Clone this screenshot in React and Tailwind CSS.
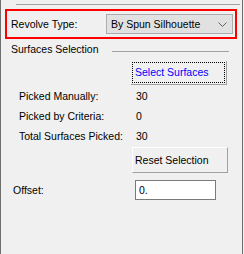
const font = { fontFamily: '"Liberation Sans", Arial, sans-serif' };

const CountRow = ({ label, value, className = '' }) => (
  <div className={`flex ml-[18px] h-[13px] leading-[13px] ${className}`}>
    <span className="w-[117px]">{label}</span>
    <span>{value}</span>
  </div>
);

const App = () => {
  return (
    <div className="w-[244px] h-[254px] bg-[#f0f0f0] pr-px text-[10.5px] text-black" style={font}>
      <div className="h-full border-l border-r border-[#6e6e6e] flex flex-col">
        {/* top rule */}
        <div className="mt-[4px] ml-[15px] mr-[2px] h-px bg-[#a0a0a0]" />

        {/* revolve type */}
        <div className="mt-[4px] ml-[4px] w-[232px] h-[30px] border-2 border-[#ff0000] flex items-center justify-between pl-[4px] pr-[2px]">
          <span className="leading-[13px]">Revolve Type:</span>
          <div className="w-[127px] h-[20px] bg-[#e1e1e1] border border-[#adadad] flex items-center justify-between pl-[4px] pr-[5px]">
            <span className="leading-[13px]">By Spun Silhouette</span>
            <svg width="9" height="5" viewBox="0 0 9 5" fill="none">
              <path d="M0.5 0.5L4.5 4.5L8.5 0.5" stroke="#606060" strokeWidth="1" />
            </svg>
          </div>
        </div>

        {/* group header */}
        <div className="mt-[4px] flex h-[13px] leading-[13px]">
          <span className="ml-[10px]">Surfaces Selection</span>
          <div className="ml-auto mr-[13px] mt-[8px] w-[117px] h-px bg-[#a0a0a0]" />
        </div>

        <button className="mt-[5px] ml-[130px] w-[96px] h-[24px] p-px bg-[#f0f0f0] border-r border-b border-[#a0a0a0] text-left">
          <div className="h-full border border-dotted border-black flex items-center pl-[2px] leading-[13px] text-[#0000ff]">
            Select Surfaces
          </div>
        </button>

        <CountRow className="mt-[5px]" label="Picked Manually:" value="30" />
        <CountRow className="mt-[7px]" label="Picked by Criteria:" value="0" />
        <CountRow className="mt-[7px]" label="Total Surfaces Picked:" value="30" />

        <button className="mt-[4px] ml-[131px] w-[96px] h-[26px] bg-[#f0f0f0] border-t border-l border-white border-r border-b border-r-[#a0a0a0] border-b-[#a0a0a0] text-left pl-[2px] leading-[13px]">
          Reset Selection
        </button>

        <div className="mt-[7px] flex items-center">
          <span className="ml-[12px] w-[122px] leading-[13px]">Offset:</span>
          <div className="w-[81px] h-[20px] bg-white border border-[#7a7a7a] flex items-center pl-[3px] leading-[13px]">
            0.
          </div>
        </div>
      </div>
    </div>
  );
};

export default App;
